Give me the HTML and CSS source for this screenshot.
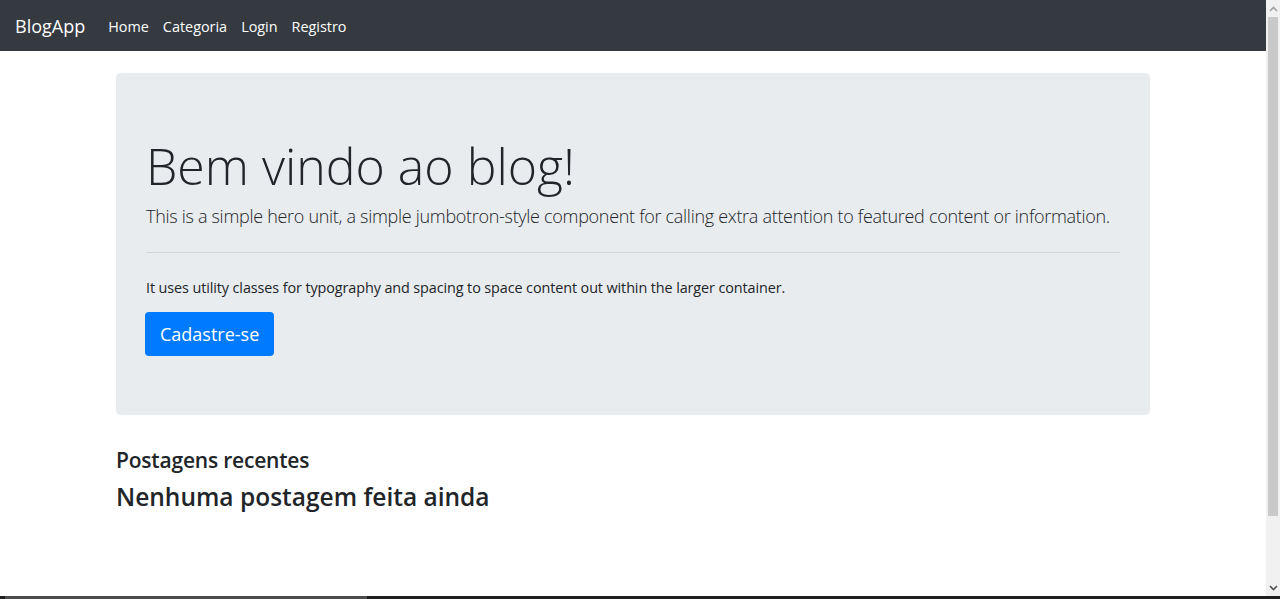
FILE: index.html
```html
<!DOCTYPE html>
<html lang="pt">
<head>
<meta charset="utf-8">
<title>BlogApp</title>
<link rel="stylesheet" href="styles.css">
</head>
<body>
<div class="screen">
  <div class="window">
    <div class="page">
      <nav class="navbar">
        <a class="brand" href="#">BlogApp</a>
        <ul class="nav">
          <li><a href="#">Home</a></li>
          <li><a href="#">Categoria</a></li>
          <li><a href="#">Login</a></li>
          <li><a href="#">Registro</a></li>
        </ul>
      </nav>
      <main class="container">
        <section class="jumbotron">
          <h1 class="display">Bem vindo ao blog!</h1>
          <p class="lead">This is a simple hero unit, a simple jumbotron-style component for calling extra attention to featured content or information.</p>
          <hr class="divider">
          <p class="body-text">It uses utility classes for typography and spacing to space content out within the larger container.</p>
          <a class="btn" href="#">Cadastre-se</a>
        </section>
        <h4 class="recent">Postagens recentes</h4>
        <h3 class="empty">Nenhuma postagem feita ainda</h3>
      </main>
    </div>
    <div class="scrollbar">
      <div class="arrow up"><svg width="9" height="6" viewBox="0 0 9 6"><path d="M1 5 L4.5 1.5 L8 5" fill="none" stroke="#a3a3a3" stroke-width="1.6"/></svg></div>
      <div class="track"><div class="thumb"></div></div>
      <div class="arrow down"><svg width="9" height="6" viewBox="0 0 9 6"><path d="M1 1 L4.5 4.5 L8 1" fill="none" stroke="#505050" stroke-width="1.6"/></svg></div>
    </div>
  </div>
  <div class="taskbar">
    <div class="taskbar-active"></div>
  </div>
</div>
</body>
</html>
```
FILE: styles.css
```css
* { box-sizing: border-box; }
html, body { margin: 0; padding: 0; height: 100%; overflow: hidden; }
body {
  font-family: "Open Sans", "Noto Sans", "Liberation Sans", sans-serif;
  color: #212529;
  background: #fff;
}
.screen { display: flex; flex-direction: column; height: 599px; }
.window { display: flex; flex: 1; min-height: 0; }
.page { flex: 1; min-width: 0; background: #fff; }

.navbar {
  display: flex;
  align-items: center;
  height: 51px;
  background: #343a40;
  padding: 1px 15px 0;
}
.brand {
  color: #fff;
  text-decoration: none;
  font-size: 18px;
  margin-right: 16px;
}
.nav { display: flex; list-style: none; margin: 0; padding: 0; }
.nav a {
  display: block;
  color: #fff;
  text-decoration: none;
  font-size: 14.4px;
  padding: 0 7px;
}

.container { width: 1034px; margin: 0 auto; }
.jumbotron {
  margin-top: 22px;
  background: #e9ecef;
  border-radius: 5px;
  padding: 63px 30px 0 30px;
  height: 342px;
}
.display {
  margin: 0 0 7px;
  font-size: 50px;
  font-weight: 300;
  line-height: 1.2;
}
.lead {
  margin: 0 0 22px;
  font-size: 18px;
  font-weight: 300;
  line-height: 1.5;
  letter-spacing: -0.3px;
  white-space: nowrap;
}
.divider {
  margin: 0 0 24px;
  border: 0;
  border-top: 1px solid #d3d6d9;
}
.body-text {
  margin: 0 0 13px;
  font-size: 14.4px;
  line-height: 1.5;
  letter-spacing: -0.1px;
}
.btn {
  display: inline-block;
  background: #007bff;
  color: #fff;
  text-decoration: none;
  font-size: 18px;
  line-height: 28px;
  padding: 8px 15px;
  border-radius: 4px;
  margin-left: -1px;
}
.recent {
  margin: 33px 0 0;
  font-size: 21px;
  font-weight: 600;
  line-height: 1.2;
  letter-spacing: -0.2px;
}
.empty {
  margin: 9px 0 0;
  font-size: 24.5px;
  font-weight: 600;
  line-height: 1.2;
}

.scrollbar {
  width: 14px;
  display: flex;
  flex-direction: column;
  background: #f1f1f1;
}
.arrow { height: 17px; display: flex; align-items: center; justify-content: center; }
.track { flex: 1; display: flex; flex-direction: column; padding: 0 2px; }
.thumb { height: 499px; background: #c9c9c9; }

.taskbar { height: 3px; background: #1f1f1f; display: flex; }
.taskbar-active { width: 362px; margin-left: 5px; background: #4d4d4d; }
```
